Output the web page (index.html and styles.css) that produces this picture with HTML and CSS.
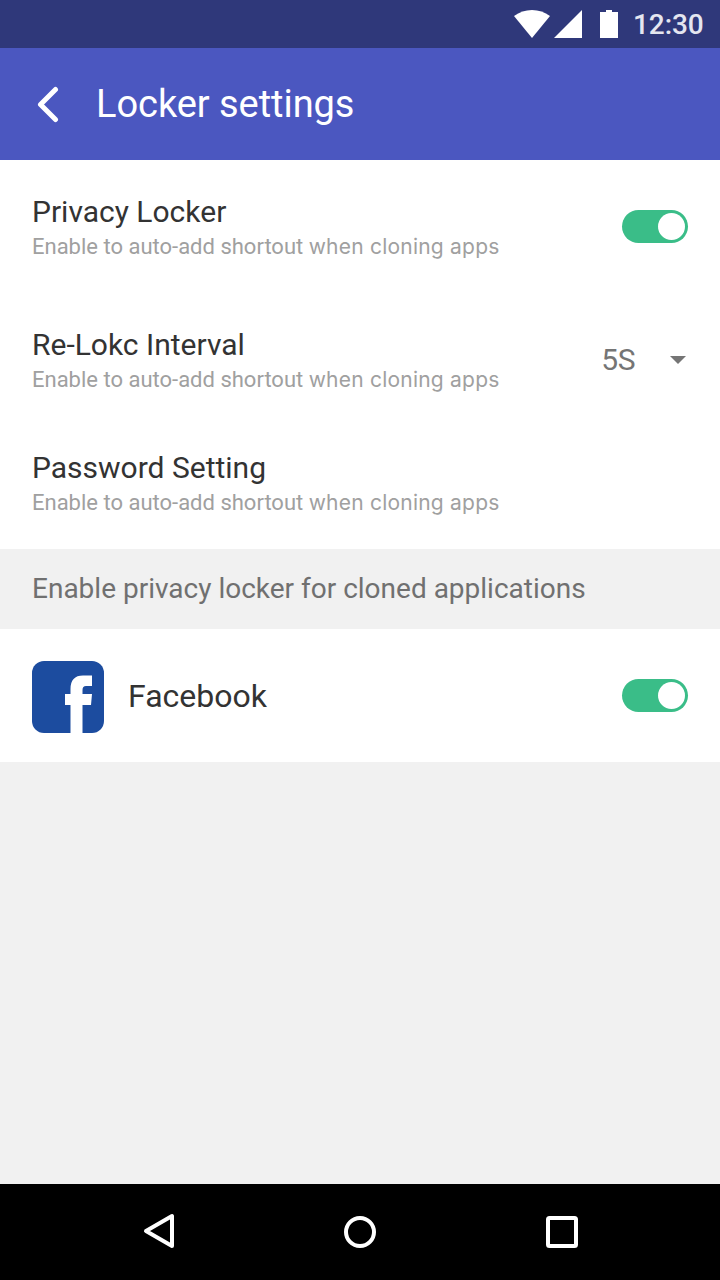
FILE: index.html
```html
<!DOCTYPE html>
<html lang="en">
<head>
<meta charset="utf-8">
<title>Locker settings</title>
<link rel="stylesheet" href="styles.css">
</head>
<body>
<div class="screen">
  <div class="status-bar">
    <svg class="status-icons" width="106" height="30" viewBox="0 0 106 30" fill="#fff">
      <path d="M0 8Q8 2 18 2T36 8L18 30Z"/>
      <path d="M68 2V30H40Z"/>
      <path d="M86 4H92V2H98V4H104V30H86Z"/>
    </svg>
    <span class="clock">12:30</span>
  </div>
  <header class="app-bar">
    <svg class="back" width="24" height="38" viewBox="0 0 24 38" fill="none" stroke="#fff" stroke-width="5" stroke-linecap="round" stroke-linejoin="round"><path d="M19.5 4.5 4.5 19.5 19.5 34.5"/></svg>
    <h1 class="title">Locker settings</h1>
  </header>
  <main class="content">
    <section class="row">
      <div class="text">
        <h2 class="name">Privacy Locker</h2>
        <p class="hint">Enable to auto-add shortout <span class="hint-alt">when cloning apps</span></p>
      </div>
      <span class="toggle"><span class="knob"></span></span>
    </section>
    <section class="row">
      <div class="text">
        <h2 class="name">Re-Lokc Interval</h2>
        <p class="hint">Enable to auto-add shortout <span class="hint-alt">when cloning apps</span></p>
      </div>
      <span class="value">5S</span>
      <svg class="caret" width="16" height="8" viewBox="0 0 16 8" fill="#757575"><path d="M0 0H16L8 8Z"/></svg>
    </section>
    <section class="row last">
      <div class="text">
        <h2 class="name">Password Setting</h2>
        <p class="hint">Enable to auto-add shortout <span class="hint-alt">when cloning apps</span></p>
      </div>
    </section>
    <h3 class="group">Enable privacy locker for cloned applications</h3>
    <section class="row app">
      <svg class="logo" width="72" height="72" viewBox="0 0 72 72">
        <rect width="72" height="72" rx="12" fill="#1c4c9f"/>
        <path d="M38.5 72V44H33V33H38.5V28Q38.5 14.5 51 14.5H60V25H54Q50.5 25 50.5 29V33H60L59 44H50.5V72Z" fill="#fff"/>
      </svg>
      <span class="app-name">Facebook</span>
      <span class="toggle"><span class="knob"></span></span>
    </section>
  </main>
  <nav class="nav-bar">
    <svg width="480" height="96" viewBox="0 0 480 96" fill="none" stroke="#fff" stroke-width="4" stroke-linejoin="round">
      <path d="M52 32V62L26 47Z"/>
      <circle cx="240" cy="48" r="14"/>
      <rect x="428" y="34" width="28" height="28" rx="1.5"/>
    </svg>
  </nav>
</div>
</body>
</html>
```
FILE: styles.css
```css
* { box-sizing: border-box; }
body { margin: 0; font-family: Roboto, sans-serif; }
h1, h2, h3, p { margin: 0; font-weight: 400; white-space: nowrap; }
svg { display: block; flex: none; }
.screen { width: 720px; height: 1280px; display: flex; flex-direction: column; background: #f1f1f1; overflow: hidden; }
.status-bar { height: 48px; background: #2f387a; display: flex; padding: 8px 0 0 514px; }
.clock { margin-left: 13px; font-size: 28px; font-weight: 500; line-height: 34px; letter-spacing: -0.1px; color: #e4e6f0; }
.app-bar { height: 112px; background: #4b57c0; display: flex; align-items: center; padding-left: 36px; }
.title { margin-left: 36px; color: #fff; font-size: 38px; line-height: 112px; letter-spacing: -0.05px; }
.content { flex: 1; }
.row { height: 133px; padding: 0 32px; display: flex; align-items: center; background: #fff; }
.row.last { height: 123px; padding-bottom: 10px; }
.text { flex: 1; padding-top: 2px; }
.name { font-size: 30px; line-height: 36px; color: #333; }
.hint { height: 32px; font-size: 22px; line-height: 34px; color: #a0a0a0; }
.hint-alt { font-family: Inter, sans-serif; font-size: 21px; line-height: 20px; letter-spacing: 0.22px; }
.toggle { width: 66px; height: 33px; border-radius: 17px; background: #3abd88; padding: 3px; display: flex; justify-content: flex-end; }
.knob { width: 27px; height: 27px; border-radius: 50%; background: #fff; }
.value { font-size: 30px; letter-spacing: -0.5px; color: #757575; }
.caret { margin: 0 2px 0 35px; }
.group { height: 80px; padding-left: 32px; font-size: 28px; line-height: 80px; color: #707070; }
.logo { margin-top: 3px; }
.app-name { flex: 1; margin-left: 24px; font-size: 32px; color: #333; }
.nav-bar { height: 96px; background: #000; padding-left: 120px; }
```
